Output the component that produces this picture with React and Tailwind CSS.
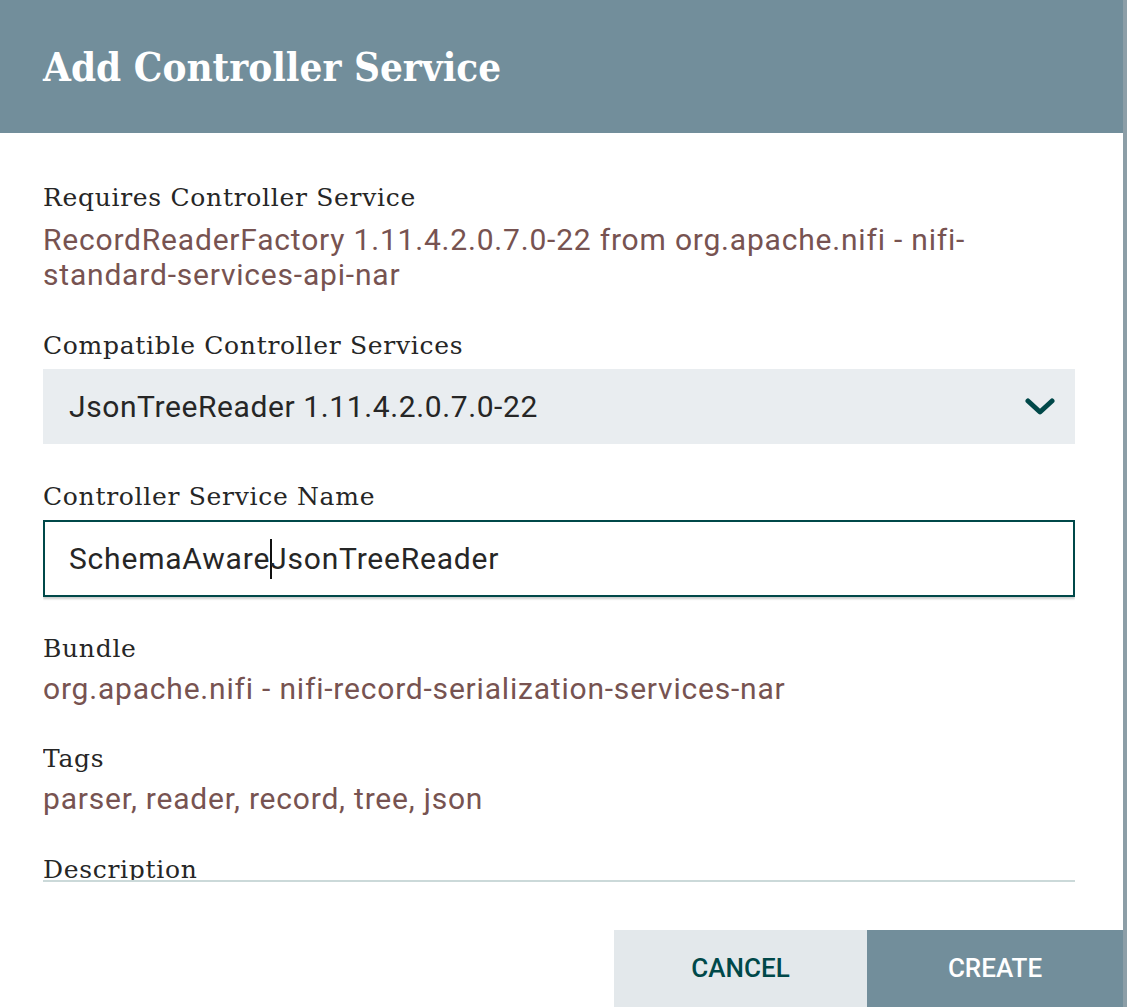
import React from 'react';

const slab = { fontFamily: '"DejaVu Serif", serif' };
const slabTitle = { fontFamily: '"DejaVu Serif Condensed", "DejaVu Serif", serif' };

const Label = ({ children, className = '' }) => (
    <div className={`text-[25px] leading-[32px] tracking-[0.7px] text-[#262626] ${className}`} style={slab}>
        {children}
    </div>
);

const Value = ({ children, className = '' }) => (
    <div className={`text-[30px] leading-[35px] tracking-[0.8px] text-[#775351] ${className}`}>
        {children}
    </div>
);

const App = () => {
    return (
        <div className="flex h-[1007px] w-full overflow-hidden bg-[#8c9ea7] font-['Roboto',sans-serif]">
            <div className="flex w-[1123px] shrink-0 flex-col bg-white">
                {/* header */}
                <div className="flex h-[133px] items-center bg-[#728e9b] px-[43px]">
                    <h1 className="text-[40px] font-bold leading-none text-white" style={slabTitle}>
                        Add Controller Service
                    </h1>
                </div>

                {/* scrollable body */}
                <div className="pl-[43px] pr-[48px]">
                    <div className="h-[749px] overflow-hidden border-b-2 border-[#cbd9d9] pt-[49px]">
                        <Label>Requires Controller Service</Label>
                        <Value className="mt-[8px]">
                            RecordReaderFactory 1.11.4.2.0.7.0-22 from org.apache.nifi - nifi-standard-services-api-nar
                        </Value>

                        <Label className="mt-[38px]">Compatible Controller Services</Label>
                        <div className="mt-[7px] flex h-[75px] items-center justify-between bg-[#e9edf0] pl-[26px] pr-[20px]">
                            <span className="text-[30px] tracking-[0.6px] text-[#262626]">JsonTreeReader 1.11.4.2.0.7.0-22</span>
                            <svg width="30" height="20" viewBox="0 0 30 20" fill="none">
                                <polyline points="3,4 15,15 27,4" stroke="#004849" strokeWidth="5" strokeLinecap="round" strokeLinejoin="round" />
                            </svg>
                        </div>

                        <Label className="mt-[37px]">Controller Service Name</Label>
                        <div className="mt-[7px] flex h-[77px] items-center border-2 border-[#004849] pl-[24px] shadow-[0_2px_2px_rgba(0,0,0,0.2)]">
                            <span className="text-[30px] tracking-[0.8px] text-[#262626]">SchemaAware</span>
                            <span className="h-[40px] w-[2px] bg-[#111]" />
                            <span className="-ml-[2px] text-[30px] tracking-[0.8px] text-[#262626]">JsonTreeReader</span>
                        </div>

                        <Label className="mt-[36px]">Bundle</Label>
                        <Value className="mt-[6px]">org.apache.nifi - nifi-record-serialization-services-nar</Value>

                        <Label className="mt-[37px]">Tags</Label>
                        <Value className="mt-[6px]">parser, reader, record, tree, json</Value>

                        <Label className="mt-[38px]">Description</Label>
                    </div>
                </div>

                {/* footer buttons */}
                <div className="flex flex-1 items-end justify-end">
                    <button className="h-[77px] w-[253px] bg-[#e3e8eb] text-[26px] font-medium text-[#004849]">
                        CANCEL
                    </button>
                    <button className="h-[77px] w-[256px] bg-[#728e9b] text-[26px] font-medium text-white">
                        CREATE
                    </button>
                </div>
            </div>
            <div className="flex-1" />
        </div>
    );
};

export default App;
